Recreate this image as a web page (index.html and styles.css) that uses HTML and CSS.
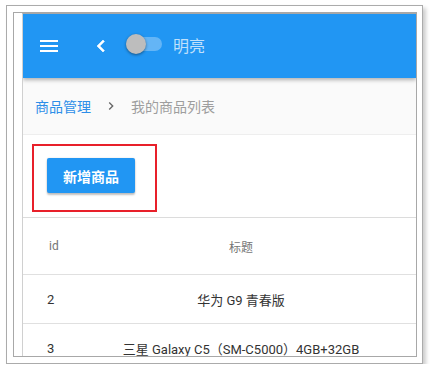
FILE: index.html
```html
<!DOCTYPE html>
<html>
<head>
    <meta charset="utf-8">
    <title>商品管理 - 我的商品列表</title>
    <link rel="stylesheet" href="styles.css">
</head>
<body>
    <div class="frame">
        <div class="screen">
            <div class="app">
                <header class="topbar">
                    <svg class="icon" viewBox="0 0 24 24"><path d="M3 18h18v-2H3v2zm0-5h18v-2H3v2zm0-7v2h18V6H3z"/></svg>
                    <svg class="icon back" viewBox="0 0 24 24"><path d="M15.41 7.41L14 6l-6 6 6 6 1.41-1.41L10.83 12z"/></svg>
                    <span class="switch"><span class="track"></span><span class="thumb"></span></span>
                    <span class="mode">明亮</span>
                </header>

                <nav class="crumbs">
                    <a href="#">商品管理</a>
                    <svg class="sep" viewBox="0 0 24 24"><path d="M10 6L8.59 7.41 13.17 12l-4.58 4.59L10 18l6-6z"/></svg>
                    <span>我的商品列表</span>
                </nav>

                <div class="toolbar">
                    <button class="btn">新增商品</button>
                    <div class="mark"></div>
                </div>

                <div class="table">
                    <div class="row head">
                        <div class="c-id">id</div>
                        <div class="c-title">标题</div>
                    </div>
                    <div class="row">
                        <div class="c-id">2</div>
                        <div class="c-title">华为 G9 青春版</div>
                    </div>
                    <div class="row">
                        <div class="c-id">3</div>
                        <div class="c-title">三星 Galaxy C5（SM-C5000）4GB+32GB</div>
                    </div>
                </div>
            </div>
        </div>
    </div>
</body>
</html>
```

FILE: styles.css
```css
* {
    margin: 0;
    padding: 0;
    box-sizing: border-box;
}
body {
    font-family: Roboto, "Noto Sans CJK SC", sans-serif;
    background: white;
    color: #333;
}
.frame {
    width: 417px;
    height: 359px;
    margin: 5px 0 0 6px;
    padding: 6px 5px 6px 6px;
    border: 1px solid #ababab;
    box-shadow: 3px 3px 4px rgba(0, 0, 0, 0.2);
}
.screen {
    height: 345px;
    padding-left: 8px;
    border: 1px solid #a8a8a8;
    overflow: hidden;
}
.app {
    height: 343px;
    border-left: 1px solid #d0d0d0;
    border-top: 1px solid #a8a8a8;
    overflow: hidden;
}
.topbar {
    display: flex;
    align-items: center;
    height: 64px;
    padding-left: 14px;
    background: #2196f3;
    box-shadow: 0 2px 4px rgba(0, 0, 0, 0.3);
    position: relative;
    z-index: 1;
}
.icon {
    width: 24px;
    height: 24px;
    fill: white;
}
.icon.back {
    margin-left: 28px;
    stroke: white;
    stroke-width: 0.6;
}
.switch {
    position: relative;
    width: 36px;
    height: 20px;
    margin: 0 0 4px 13px;
}
.track {
    position: absolute;
    left: 0;
    right: 0;
    top: 3px;
    height: 14px;
    border-radius: 7px;
    background: rgba(255, 255, 255, 0.3);
}
.thumb {
    position: absolute;
    left: 0;
    top: 0;
    width: 20px;
    height: 20px;
    border-radius: 50%;
    background: #bdbdbd;
    box-shadow: 0 1px 3px rgba(0, 0, 0, 0.45);
}
.mode {
    margin: 0 0 2px 11px;
    font-size: 16px;
    color: rgba(255, 255, 255, 0.72);
}
.crumbs {
    display: flex;
    align-items: center;
    height: 57px;
    padding-left: 12px;
    background: #fafafa;
    border-bottom: 1px solid #eeeeee;
    font-size: 14px;
    color: #9e9e9e;
}
.crumbs a {
    color: #2d8ee8;
    text-decoration: none;
}
.sep {
    width: 16px;
    height: 16px;
    margin: 0 12px;
    fill: #666;
}
.toolbar {
    position: relative;
    height: 83px;
    padding: 23px 0 0 24px;
    border-bottom: 1px solid #dcdcdc;
}
.btn {
    width: 88px;
    height: 35px;
    border: none;
    border-radius: 2px;
    background: #2196f3;
    color: white;
    font-family: inherit;
    font-size: 14px;
    font-weight: 700;
    box-shadow: 0 2px 2px rgba(0, 0, 0, 0.24), 0 0 2px rgba(0, 0, 0, 0.12);
}
.mark {
    position: absolute;
    left: 9px;
    top: 9px;
    width: 125px;
    height: 68px;
    border: 2px solid #e8202a;
}
.row {
    display: grid;
    grid-template-columns: 43px 1fr;
    align-items: center;
    height: 49px;
    border-bottom: 1px solid #e0e0e0;
    font-size: 13px;
}
.row.head {
    height: 57px;
    font-size: 12px;
    color: #757575;
}
.c-id {
    padding-left: 24px;
}
.head .c-id {
    padding-left: 26px;
}
.c-title {
    text-align: center;
}
```
